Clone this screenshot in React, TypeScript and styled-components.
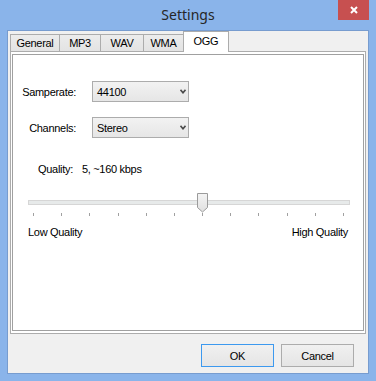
import React from "react";
import styled, { createGlobalStyle } from "styled-components";

const GlobalStyle = createGlobalStyle`
    html, body {
        margin: 0;
        padding: 0;
        background: #8ab4ea;
    }
    body {
        font-family: "Liberation Sans", Arial, sans-serif;
    }
`;

const TABS = ["General", "MP3", "WAV", "WMA", "OGG"];
const TAB_WIDTHS = [50, 42, 44, 41, 46];

// OGG Vorbis quality goes from -1 to 10
const QUALITY_MIN = -1;
const QUALITY_MAX = 10;
const QUALITY = 5;

export default function App() {
    const active = "OGG";
    const tickCount = QUALITY_MAX - QUALITY_MIN + 1;
    const tickStart = 5;
    const tickStep = 310 / (tickCount - 1);
    const thumbLeft = tickStart + (QUALITY - QUALITY_MIN) * tickStep - 5.5;

    return (
        <>
            <GlobalStyle />
            <Window>
                <TitleBar>
                    <Title>Settings</Title>
                    <CloseButton aria-label='Close'>
                        <svg width='8' height='8' viewBox='0 0 8 8'>
                            <path
                                d='M1 1 L7 7 M7 1 L1 7'
                                stroke='#fff'
                                strokeWidth='2'
                            />
                        </svg>
                    </CloseButton>
                </TitleBar>

                <Client>
                    <TabStrip>
                        {TABS.map((tab, i) => (
                            <Tab
                                key={tab}
                                $active={tab === active}
                                $width={TAB_WIDTHS[i]}
                            >
                                {tab}
                            </Tab>
                        ))}
                    </TabStrip>

                    <TabPage>
                        <Frame>
                            <FormGrid>
                                <FieldLabel>Samperate:</FieldLabel>
                                <Combo>
                                    <span>44100</span>
                                    <Chevron />
                                </Combo>
                                <FieldLabel>Channels:</FieldLabel>
                                <Combo>
                                    <span>Stereo</span>
                                    <Chevron />
                                </Combo>
                            </FormGrid>

                            <QualityLine>
                                Quality:<QualityValue>5, ~160 kbps</QualityValue>
                            </QualityLine>

                            <Slider>
                                <TrackArea>
                                    <Track />
                                    <Thumb style={{ left: thumbLeft }}>
                                        <svg
                                            width='11'
                                            height='20'
                                            viewBox='0 0 11 20'
                                        >
                                            <defs>
                                                <linearGradient
                                                    id='thumbFill'
                                                    x1='0'
                                                    y1='0'
                                                    x2='0'
                                                    y2='1'
                                                >
                                                    <stop
                                                        offset='0'
                                                        stopColor='#f4f4f4'
                                                    />
                                                    <stop
                                                        offset='1'
                                                        stopColor='#e0e0e0'
                                                    />
                                                </linearGradient>
                                            </defs>
                                            <path
                                                d='M0.5 0.5 H10.5 V14.5 L5.5 19 L0.5 14.5 Z'
                                                fill='url(#thumbFill)'
                                                stroke='#9b9b9b'
                                            />
                                        </svg>
                                    </Thumb>
                                </TrackArea>
                                <TickRow>
                                    {Array.from({ length: tickCount }).map(
                                        (_, i) => (
                                            <Tick key={i} />
                                        )
                                    )}
                                </TickRow>
                                <ScaleLabels>
                                    <span>Low Quality</span>
                                    <span>High Quality</span>
                                </ScaleLabels>
                            </Slider>
                        </Frame>
                    </TabPage>

                    <ButtonRow>
                        <DialogButton $default>OK</DialogButton>
                        <DialogButton>Cancel</DialogButton>
                    </ButtonRow>
                </Client>
            </Window>
        </>
    );
}

const Chevron = () => (
    <svg width='6' height='5' viewBox='0 0 6 5'>
        <path
            d='M0.5 0.8 L3 3.8 L5.5 0.8'
            fill='none'
            stroke='#4a4a4a'
            strokeWidth='1.6'
        />
    </svg>
);

const Window = styled.div`
    width: 376px;
    height: 381px;
    box-sizing: border-box;
    background: #8ab4ea;
    padding: 0 7px 7px;
    display: flex;
    flex-direction: column;
`;

const TitleBar = styled.div`
    height: 30px;
    margin: 0 -7px;
    display: grid;
    grid-template-columns: 1fr auto 1fr;
    align-items: start;
`;

const Title = styled.div`
    grid-column: 2;
    line-height: 30px;
    font-family: "Noto Sans", "Open Sans", sans-serif;
    font-size: 14px;
    color: #262626;
`;

const CloseButton = styled.div`
    grid-column: 3;
    justify-self: end;
    margin-right: 7px;
    width: 31px;
    height: 20px;
    background: #c75050;
    display: flex;
    align-items: center;
    justify-content: center;
`;

const Client = styled.div`
    flex: 1;
    background: #f0f0f0;
    border: 1px solid #779ccf;
    display: flex;
    flex-direction: column;
    font-size: 11px;
    letter-spacing: -0.3px;
    color: #000;
`;

const TabStrip = styled.div`
    height: 20px;
    padding-left: 2px;
    display: flex;
    align-items: flex-end;
    position: relative;
    z-index: 1;
`;

const Tab = styled.div<{ $active?: boolean; $width: number }>`
    box-sizing: border-box;
    width: ${(p) => p.$width}px;
    height: ${(p) => (p.$active ? 21 : 17)}px;
    margin-left: -1px;
    margin-bottom: ${(p) => (p.$active ? -1 : 0)}px;
    border: 1px solid #acacac;
    border-bottom: none;
    background: ${(p) =>
        p.$active ? "#fff" : "linear-gradient(#ececec, #e3e3e3)"};
    display: flex;
    align-items: center;
    justify-content: center;
    padding-bottom: ${(p) => (p.$active ? 3 : 0)}px;
    &:first-child {
        margin-left: 0;
    }
`;

const TabPage = styled.div`
    height: 283px;
    box-sizing: border-box;
    margin: 0 2px 0 2px;
    border: 1px solid #acacac;
    background: #fff;
    padding: 2px 1px;
    display: flex;
`;

const Frame = styled.div`
    flex: 1;
    border: 1px solid #a0a0a0;
    display: flex;
    flex-direction: column;
`;

const FormGrid = styled.div`
    margin-top: 26px;
    padding-left: 9px;
    display: grid;
    grid-template-columns: 54px 97px;
    column-gap: 16px;
    row-gap: 15px;
    align-items: center;
`;

const FieldLabel = styled.div`
    justify-self: end;
    white-space: nowrap;
`;

const Combo = styled.div`
    height: 21px;
    box-sizing: border-box;
    border: 1px solid #acacac;
    background: linear-gradient(#f2f2f2, #e6e6e6);
    display: flex;
    align-items: center;
    justify-content: space-between;
    padding: 0 2px 0 4px;
`;

const QualityLine = styled.div`
    margin-top: 25px;
    padding-left: 25px;
    line-height: 13px;
    white-space: nowrap;
`;

const QualityValue = styled.span`
    margin-left: 9px;
`;

const Slider = styled.div`
    margin: 17px 0 0 15px;
    width: 322px;
    display: flex;
    flex-direction: column;
`;

const TrackArea = styled.div`
    position: relative;
    height: 20px;
`;

const Track = styled.div`
    margin-top: 7px;
    height: 5px;
    box-sizing: border-box;
    border: 1px solid #d6d6d6;
    background: #e7eaea;
`;

const Thumb = styled.div`
    position: absolute;
    top: 0;
    width: 11px;
    height: 20px;
    line-height: 0;
`;

const TickRow = styled.div`
    height: 4px;
    padding: 0 6px 0 5px;
    display: flex;
    justify-content: space-between;
`;

const Tick = styled.div`
    width: 1px;
    height: 3px;
    background: #a0a0a0;
`;

const ScaleLabels = styled.div`
    margin-top: 9px;
    padding-right: 2px;
    line-height: 13px;
    display: flex;
    justify-content: space-between;
`;

const ButtonRow = styled.div`
    margin-top: 10px;
    padding-right: 14px;
    display: flex;
    justify-content: flex-end;
    gap: 7px;
`;

const DialogButton = styled.div<{ $default?: boolean }>`
    width: 73px;
    height: 23px;
    box-sizing: border-box;
    border: 1px solid ${(p) => (p.$default ? "#3c99ef" : "#acacac")};
    background: linear-gradient(#f0f0f0, #e5e5e5);
    display: flex;
    align-items: center;
    justify-content: center;
`;
